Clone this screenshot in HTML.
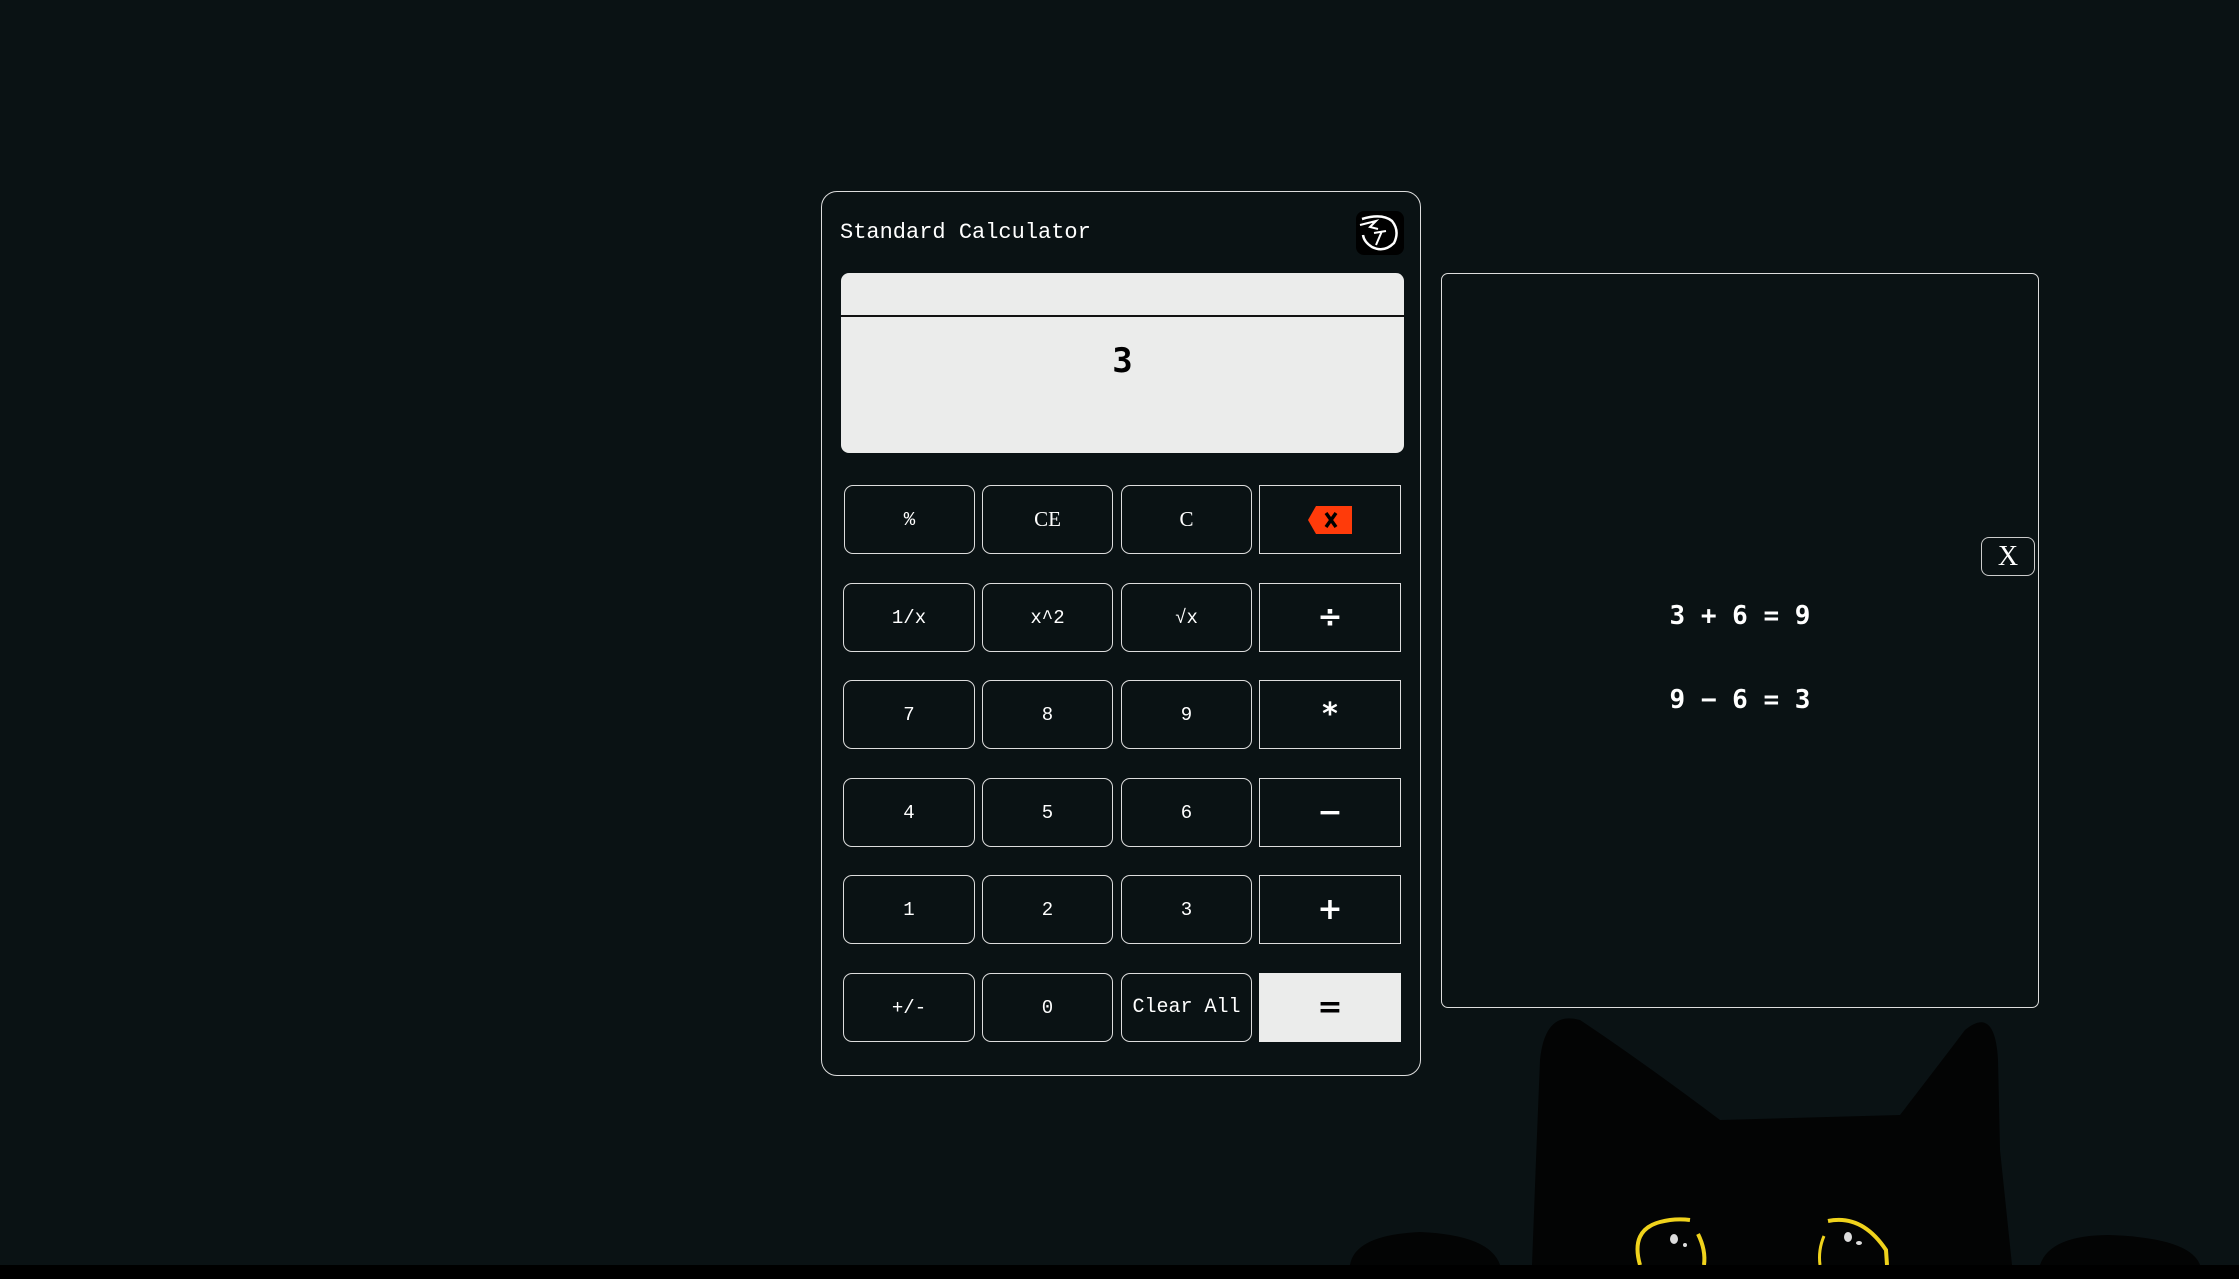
<!DOCTYPE html>
<html><head><meta charset="utf-8"><style>
*{margin:0;padding:0;box-sizing:border-box}
html,body{width:2239px;height:1279px;overflow:hidden;background:#0a1214;position:relative;font-family:"Liberation Mono",monospace}
.abs{position:absolute}
.calc{left:821px;top:191px;width:600px;height:885px;border:1.5px solid #ddd;border-radius:16px}
.title{left:840px;top:220px;color:#fff;font-size:22px;white-space:pre}
.disp{left:841px;top:273px;width:563px;height:180px;background:#ebeceb;border-radius:8px;overflow:hidden}
.disp .line{position:absolute;left:0;top:42px;width:100%;height:2px;background:#111}
.disp .num{position:absolute;left:0;width:100%;top:68px;text-align:center;font:bold 34px "DejaVu Sans Mono",monospace;color:#000}
.b{position:absolute;border:1.5px solid #ddd;border-radius:9px;color:#fff;font-size:19px;display:flex;align-items:center;justify-content:center}
.op{border-radius:0;font:bold 30px "DejaVu Sans",sans-serif}
.hist{left:1441px;top:273px;width:598px;height:735px;border:1.5px solid #ddd;border-radius:7px}
.ht{left:1441px;width:598px;text-align:center;color:#fff;font:bold 26px "DejaVu Sans Mono",monospace;white-space:pre}
.xb{left:1981px;top:537px;width:54px;height:39px;border:1.5px solid #ccc;border-radius:8px;color:#fff;font:28px "Liberation Serif",serif;display:flex;align-items:center;justify-content:center}
</style></head><body>
<svg class="abs" style="left:0;top:0" width="2239" height="1279">
<path d="M1532 1265 L1536 1160 L1540 1060 Q1545 1010 1580 1020 Q1640 1060 1720 1120 L1900 1115 Q1950 1050 1965 1030 Q1995 1005 1998 1060 L2000 1150 L2012 1265 Z" fill="#030404"/>
<path d="M1350 1265 Q1355 1235 1420 1232 Q1490 1235 1500 1265 Z" fill="#030404"/>
<path d="M2040 1265 Q2050 1235 2110 1235 Q2190 1238 2200 1265 Z" fill="#030404"/>
<path d="M1640 1265 Q1630 1230 1660 1222 Q1675 1218 1690 1220" stroke="#f0d31c" stroke-width="4" fill="none"/>
<path d="M1698 1234 Q1706 1250 1704 1265" stroke="#f0d31c" stroke-width="4" fill="none"/>
<path d="M1828 1221 Q1862 1214 1886 1250 L1887 1265" stroke="#f0d31c" stroke-width="4" fill="none"/>
<path d="M1824 1236 Q1818 1250 1820 1265" stroke="#f0d31c" stroke-width="3" fill="none"/>
<ellipse cx="1674" cy="1239" rx="4" ry="5" fill="#ddd"/><circle cx="1685" cy="1245" r="2" fill="#ddd"/>
<ellipse cx="1848" cy="1237" rx="4" ry="5" fill="#ddd"/><ellipse cx="1859" cy="1243" rx="3" ry="2" fill="#ddd"/>
<rect x="0" y="1265" width="2239" height="14" fill="#000"/>
</svg>
<div class="abs calc"></div>
<div class="abs title">Standard Calculator</div>
<svg class="abs" style="left:1356px;top:211px" width="48" height="44" viewBox="0 0 48 44"><rect width="48" height="44" rx="8" fill="#000"/><path d="M6 8 Q26 2 36 10 Q44 20 38 32 Q28 42 16 36 Q8 31 7 24" stroke="#fff" stroke-width="2.5" fill="none"/><path d="M4 14 L20 10 L14 16 L22 18 M18 22 L30 20 M26 20 L20 34" stroke="#fff" stroke-width="2" fill="none"/></svg>
<div class="abs disp"><div class="line"></div><div class="num">3</div></div>
<div class="abs hist"></div>
<div class="abs xb">X</div>
<div class="abs ht" style="top:601px">3 + 6 = 9</div>
<div class="abs ht" style="top:685px">9 − 6 = 3</div>

<div class="b" style="left:844px;top:485px;width:131px;height:69px">%</div>
<div class="b" style="left:982px;top:485px;width:131px;height:69px;font-family:'Liberation Serif',serif;font-size:21px">CE</div>
<div class="b" style="left:1121px;top:485px;width:131px;height:69px;font-family:'Liberation Serif',serif;font-size:21px">C</div>
<div class="b op" style="left:1259px;top:485px;width:142px;height:69px"><svg width="44" height="28" viewBox="0 0 44 28"><path d="M0 14 L8 0 H44 V28 H8 Z" fill="#ff3b0a"/><path d="M18 7 L28 21 M28 7 L18 21" stroke="#000" stroke-width="3.5"/></svg></div>

<div class="b" style="left:843px;top:583px;width:132px;height:69px">1/x</div>
<div class="b" style="left:982px;top:583px;width:131px;height:69px">x^2</div>
<div class="b" style="left:1121px;top:583px;width:131px;height:69px">√x</div>
<div class="b op" style="left:1259px;top:583px;width:142px;height:69px">÷</div>

<div class="b" style="left:843px;top:680px;width:132px;height:69px">7</div>
<div class="b" style="left:982px;top:680px;width:131px;height:69px">8</div>
<div class="b" style="left:1121px;top:680px;width:131px;height:69px">9</div>
<div class="b op" style="left:1259px;top:680px;width:142px;height:69px">*</div>

<div class="b" style="left:843px;top:778px;width:132px;height:69px">4</div>
<div class="b" style="left:982px;top:778px;width:131px;height:69px">5</div>
<div class="b" style="left:1121px;top:778px;width:131px;height:69px">6</div>
<div class="b op" style="left:1259px;top:778px;width:142px;height:69px">−</div>

<div class="b" style="left:843px;top:875px;width:132px;height:69px">1</div>
<div class="b" style="left:982px;top:875px;width:131px;height:69px">2</div>
<div class="b" style="left:1121px;top:875px;width:131px;height:69px">3</div>
<div class="b op" style="left:1259px;top:875px;width:142px;height:69px">+</div>

<div class="b" style="left:843px;top:973px;width:132px;height:69px">+/-</div>
<div class="b" style="left:982px;top:973px;width:131px;height:69px">0</div>
<div class="b" style="left:1121px;top:973px;width:131px;height:69px;font-size:20px">Clear All</div>
<div class="b op" style="left:1259px;top:973px;width:142px;height:69px;background:#ebeceb;border-color:#ebeceb;color:#000">=</div>
</body></html>
